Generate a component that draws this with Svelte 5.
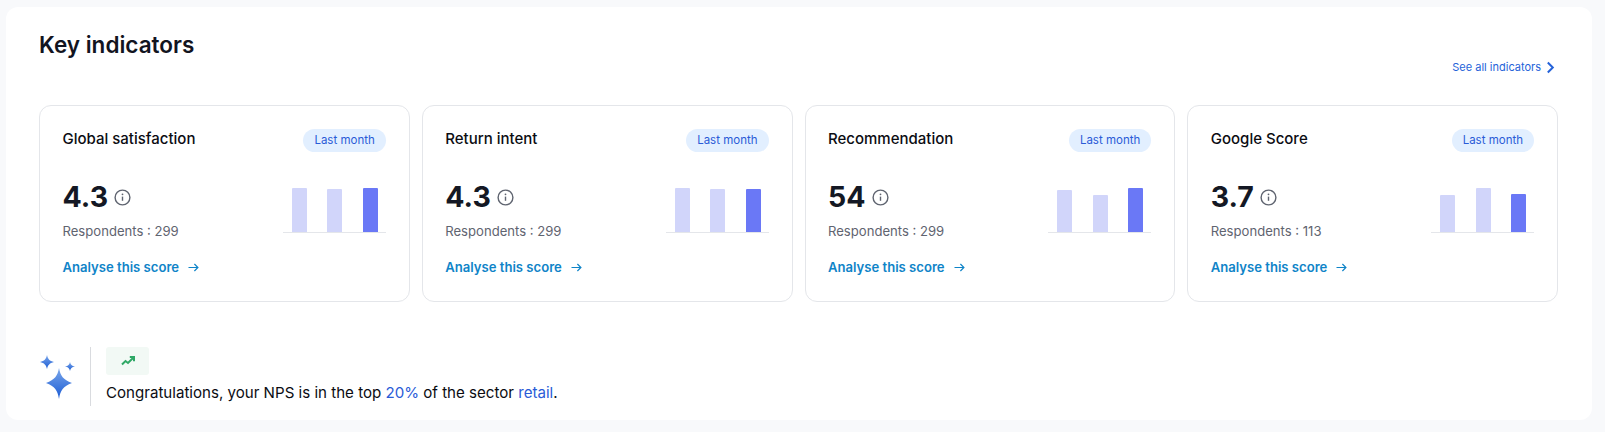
<script>
  // Cards shown in the key indicators row
  const indicators = [
    { title: "Global satisfaction", value: "4.3", respondents: 299, bars: [44, 43, 44] },
    { title: "Return intent", value: "4.3", respondents: 299, bars: [44, 43, 43] },
    { title: "Recommendation", value: "54", respondents: 299, bars: [42, 37, 44] },
    { title: "Google Score", value: "3.7", respondents: 113, bars: [37, 44, 38] }
  ];
</script>

<main class="page">
  <section class="panel">
    <header class="head">
      <h1>Key indicators</h1>
      <a class="see-all" href="#top">
        See all indicators
        <svg width="9" height="13" viewBox="0 0 9 13" fill="none">
          <path d="M1.8 1.5 6.800 6.500 1.800 11.500" stroke="#2563d9" stroke-width="2" />
        </svg>
      </a>
    </header>

    <div class="cards">
      {#each indicators as item}
        <article class="card">
          <div class="card-top">
            <h2>{item.title}</h2>
            <span class="pill">Last month</span>
          </div>
          <div class="card-mid">
            <div>
              <div class="score">
                <strong>{item.value}</strong>
                <svg width="17" height="17" viewBox="0 0 17 17" fill="none">
                  <circle cx="8.5" cy="8.5" r="7.4" stroke="#5f6470" stroke-width="1.4" />
                  <path d="M8.5 7.6v4.2" stroke="#5f6470" stroke-width="1.4" />
                  <circle cx="8.5" cy="5.3" r="0.9" fill="#5f6470" />
                </svg>
              </div>
              <p class="resp">Respondents : {item.respondents}</p>
            </div>
            <div class="chart">
              {#each item.bars as h, i}
                <span class="bar" class:last={i === 2} style="height: {h}px"></span>
              {/each}
            </div>
          </div>
          <a class="analyse" href="#top">
            Analyse this score
            <svg width="11" height="9" viewBox="0 0 11 9" fill="none">
              <path d="M0.5 4.500h9.200M6.400 1l3.500 3.500L6.400 8" stroke="#0f84c8" stroke-width="1.2" />
            </svg>
          </a>
        </article>
      {/each}
    </div>

    <footer class="insight">
      <svg class="stars" width="38" height="44" viewBox="0 0 38 44">
        <defs>
          <linearGradient id="star" x1="0" y1="0" x2="0" y2="1">
            <stop offset="0" stop-color="#7aa6ea" />
            <stop offset="1" stop-color="#1a5bd4" />
          </linearGradient>
        </defs>
        <path fill="url(#star)" d="M7 0C8 4 9.500 6 14 7 9.500 8 8 10 7 14 6 10 4.500 8 0 7 4.500 6 6 4 7 0Z" />
        <path fill="url(#star)" d="M30 7C30.600 9.800 31.700 10.900 35 11.500 31.700 12.100 30.600 13.200 30 16 29.400 13.200 28.300 12.100 25 11.500 28.300 10.900 29.400 9.800 30 7Z" />
        <path fill="url(#star)" d="M19 13C20.500 21 23 24.500 32 28 23 31.500 20.500 35 19 44 17.500 35 15 31.500 6 28 15 24.500 17.500 21 19 13Z" />
      </svg>
      <div class="insight-body">
        <span class="trend">
          <svg width="14" height="10" viewBox="0 0 14 10" fill="none">
            <path d="M1 8.500 4.500 5 7 7 12.500 1.500M8.800 1h4.200v4.200" stroke="#2fa866" stroke-width="2" />
          </svg>
        </span>
        <p>Congratulations, your NPS is in the top <b>20%</b> of the sector <b>retail</b>.</p>
      </div>
    </footer>
  </section>
</main>

<style>
  :global(body) {
    background: #f8f9fb;
  }

  .page {
    font-family: Inter, "Liberation Sans", sans-serif;
    padding: 7px 13px 12px 6px;
  }

  .panel {
    background: #fff;
    border-radius: 12px;
    height: 413px;
    box-sizing: border-box;
    padding: 24px 34px 0 33px;
  }

  .head {
    display: flex;
    justify-content: space-between;
    height: 74px;
  }

  h1 {
    margin: 0;
    font-size: 22.5px;
    line-height: 28px;
    font-weight: 600;
    color: #12141f;
  }

  .see-all {
    align-self: flex-end;
    margin: 0 3px 31px 0;
    display: flex;
    align-items: center;
    gap: 5px;
    font-size: 11px;
    line-height: 14px;
    color: #2563d9;
    text-decoration: none;
  }

  .cards {
    display: grid;
    grid-template-columns: repeat(4, 1fr);
    gap: 12px;
  }

  .card {
    border: 1px solid #e4e6ea;
    border-radius: 12px;
    height: 197px;
    box-sizing: border-box;
    padding: 23px 23px 0 22.5px;
  }

  .card-top {
    display: flex;
    justify-content: space-between;
    height: 50px;
  }

  h2 {
    margin: 0;
    font-size: 15px;
    line-height: 20px;
    font-weight: 500;
    color: #0b0c12;
  }

  .pill {
    background: #e2efff;
    color: #2a5bd7;
    border-radius: 12px;
    height: 23px;
    padding: 0 11px;
    font-size: 11.5px;
    line-height: 23px;
    font-weight: 400;
  }

  .card-mid {
    display: flex;
    justify-content: space-between;
    height: 68px;
  }

  .score {
    display: flex;
    align-items: center;
    gap: 6px;
    height: 36px;
  }

  strong {
    font-size: 28.5px;
    line-height: 36px;
    font-weight: 700;
    color: #141824;
  }

  .resp {
    margin: 7px 0 0;
    font-size: 13.1px;
    line-height: 18px;
    color: #5f6470;
  }

  .chart {
    width: 103px;
    height: 48px;
    margin-top: 6px;
    box-sizing: border-box;
    padding: 0 8px 0 9px;
    display: flex;
    justify-content: space-between;
    align-items: flex-end;
    border-bottom: 1px solid #e4e6ea;
  }

  .bar {
    width: 15px;
    background: #d1d5fa;
    border-radius: 1px 1px 0 0;
  }

  .bar.last {
    background: #6a78f6;
  }

  .analyse {
    margin-top: 11px;
    display: flex;
    align-items: center;
    gap: 9px;
    font-size: 13.1px;
    line-height: 18px;
    font-weight: 600;
    color: #0f84c8;
    text-decoration: none;
  }

  .insight {
    margin-top: 45px;
    display: flex;
    align-items: center;
  }

  .stars {
    margin: 0 12px 0 1px;
  }

  .insight-body {
    border-left: 1px solid #d9dbdf;
    padding-left: 15px;
    height: 59px;
  }

  .trend {
    display: flex;
    align-items: center;
    justify-content: center;
    width: 43px;
    height: 28px;
    background: #f2f9f5;
    border-radius: 3px;
  }

  p {
    margin: 0;
  }

  .insight-body p {
    margin-top: 8px;
    font-size: 15.1px;
    line-height: 20px;
    color: #0b0c12;
  }

  b {
    font-weight: 400;
    color: #2a5bd7;
  }
</style>
